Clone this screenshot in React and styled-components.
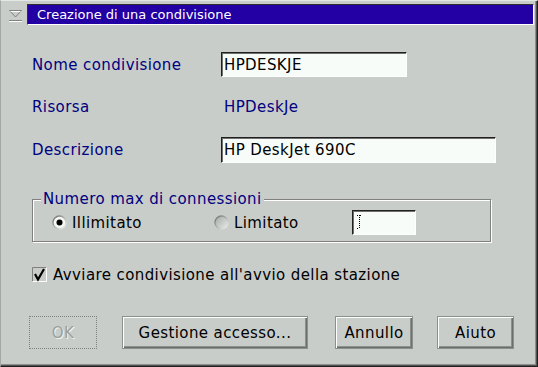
import React from "react";
import styled, { createGlobalStyle } from "styled-components";

const Global = createGlobalStyle`
  html, body { margin: 0; padding: 0; background: #c9cdc9; }
  * { box-sizing: border-box; }
`;

const Window = styled.div`
  width: 538px;
  height: 367px;
  background: #c9cdc9;
  border: 1px solid;
  border-color: #e4e8e4 #202020 #202020 #a4a8a4;
  box-shadow: inset -1px -1px 0 #505050, inset -2px -2px 0 #8c908c;
  padding-top: 3px;
  display: flex;
  flex-direction: column;
  font-family: "DejaVu Sans", "Liberation Sans", sans-serif;
  font-size: 15px;
  letter-spacing: 0.4px;
  overflow: hidden;
`;

const TitleRow = styled.div`
  display: flex;
  align-items: stretch;
  height: 21px;
  margin-right: 3px;
`;

const SysMenu = styled.div`
  width: 26px;
  flex: none;
  display: flex;
`;

const TitleBar = styled.div`
  flex: 1;
  background: #2200a4;
  border: 1px solid;
  border-color: #303030 #ffffff #ffffff #303030;
  color: #ffffff;
  font-size: 13px;
  letter-spacing: 0;
  padding-left: 9px;
  display: flex;
  align-items: center;
`;

const FormGrid = styled.div`
  margin-top: 27px;
  padding-left: 31px;
  display: grid;
  grid-template-columns: 189px 1fr;
  grid-template-rows: 25px 26px 26px;
  row-gap: 17px;
  align-items: center;
`;

const Label = styled.div`
  color: #000080;
`;

const Value = styled.div`
  color: #000080;
  padding-left: 3px;
`;

const TextInput = styled.input`
  width: ${(p) => p.$w}px;
  height: 100%;
  margin: 0;
  background: #f8fcf8;
  border: 1px solid;
  border-color: #202020 #ffffff #ffffff #202020;
  box-shadow: inset 1px 1px 0 #707070;
  padding: 0 0 0 2px;
  font-family: "DejaVu Sans", "Liberation Sans", sans-serif;
  font-size: 15px;
  letter-spacing: 0.4px;
  color: #000;
  outline: none;
`;

const Group = styled.fieldset`
  margin: 28px 0 0 31px;
  width: 459px;
  height: 51px;
  border: 1px solid #808080;
  box-shadow: inset 1px 1px 0 #ffffff, 1px 1px 0 #ffffff;
  padding: 3px 0 0 0;
  min-width: 0;
`;

const Legend = styled.legend`
  margin-left: 8px;
  padding: 0 2px;
  color: #000080;
  line-height: 16px;
  background: #c9cdc9;
`;

const GroupRow = styled.div`
  display: flex;
  align-items: center;
  height: 25px;
  padding-left: 19px;
`;

const Option = styled.label`
  width: ${(p) => p.$w}px;
  display: flex;
  align-items: center;
  gap: 5px;
  color: #000;
`;

const SmallInput = styled.div`
  width: 64px;
  height: 25px;
  background: #f8fcf8;
  border: 1px solid;
  border-color: #202020 #ffffff #ffffff #202020;
  box-shadow: inset 1px 1px 0 #707070;
  padding: 3px 0 0 3px;
  display: flex;
`;

const CheckRow = styled.label`
  margin: 25px 0 0 31px;
  height: 15px;
  display: flex;
  align-items: center;
  gap: 6px;
  color: #000;
`;

const ButtonRow = styled.div`
  margin-top: 34px;
  display: flex;
  align-items: stretch;
  height: 33px;
`;

const Button = styled.button`
  width: ${(p) => p.$w}px;
  margin-left: ${(p) => p.$ml}px;
  height: 100%;
  padding: 0;
  background: #c9cdc9;
  font-family: "DejaVu Sans", "Liberation Sans", sans-serif;
  font-size: 15px;
  letter-spacing: 0.4px;
  color: #000;
  border: 1px solid #8c908c;
  box-shadow: inset 1px 1px 0 #ffffff, inset -1px -1px 0 #6c706c,
    inset -2px -2px 0 #8c908c;
  &:disabled {
    border: 1px dotted #808080;
    box-shadow: none;
    color: #9ca09c;
    text-shadow: 1px 1px 0 #f0f4f0;
  }
`;

const Radio = ({ checked }) => (
  <svg width="15" height="15" viewBox="0 0 15 15" style={{ flex: "none" }}>
    <defs>
      <linearGradient id="rg" x1="0" y1="0" x2="1" y2="1">
        <stop offset="0" stopColor="#606460" />
        <stop offset="1" stopColor="#ffffff" />
      </linearGradient>
      <linearGradient id="ri" x1="0" y1="0" x2="1" y2="1">
        <stop offset="0" stopColor="#a8aca8" />
        <stop offset="1" stopColor="#e4e8e4" />
      </linearGradient>
    </defs>
    <circle cx="7.5" cy="7.5" r="7.2" fill="url(#rg)" />
    <circle cx="7.5" cy="7.5" r="5.8" fill={checked ? "#f4f8f4" : "url(#ri)"} />
    {checked && <circle cx="7.5" cy="7.5" r="3" fill="#000" />}
  </svg>
);

const CheckBox = () => (
  <svg width="15" height="15" viewBox="0 0 15 15" style={{ flex: "none" }}>
    <path d="M0.5 14.5 V0.5 H14.5" fill="none" stroke="#808080" />
    <path d="M0.5 14.5 H14.5 V0.5" fill="none" stroke="#ffffff" />
    <path d="M3 7 L6 12.5 L12 2" fill="none" stroke="#000" strokeWidth="2.2" />
  </svg>
);

const SysIcon = () => (
  <svg width="26" height="21" viewBox="0 0 26 21">
    <path d="M8.5 6.5 H20.5 L14.5 13 Z" fill="none" stroke="#808080" />
    <path d="M9.5 7.5 H19.5" stroke="#ffffff" />
    <path d="M8 16.5 H21" stroke="#808080" />
    <path d="M8 17.5 H21" stroke="#ffffff" />
  </svg>
);

const Cursor = () => (
  <svg width="6" height="16" viewBox="0 0 6 16">
    <path d="M3.5 1 V15" stroke="#000" strokeDasharray="1 1" />
    <path d="M1 1.5 H3 M1 14.5 H3 M4 1.5 H6" stroke="#000" strokeDasharray="1 1" />
  </svg>
);

export default function App() {
  return (
    <>
      <Global />
      <Window>
        <TitleRow>
          <SysMenu>
            <SysIcon />
          </SysMenu>
          <TitleBar>Creazione di una condivisione</TitleBar>
        </TitleRow>
        <FormGrid>
          <Label>Nome condivisione</Label>
          <TextInput $w={186} value="HPDESKJE" readOnly />
          <Label>Risorsa</Label>
          <Value>HPDeskJe</Value>
          <Label>Descrizione</Label>
          <TextInput $w={275} value="HP DeskJet 690C" readOnly />
        </FormGrid>
        <Group>
          <Legend>Numero max di connessioni</Legend>
          <GroupRow>
            <Option $w={162}>
              <Radio checked />
              Illimitato
            </Option>
            <Option $w={138}>
              <Radio />
              Limitato
            </Option>
            <SmallInput>
              <Cursor />
            </SmallInput>
          </GroupRow>
        </Group>
        <CheckRow>
          <CheckBox />
          Avviare condivisione all'avvio della stazione
        </CheckRow>
        <ButtonRow>
          <Button $w={68} $ml={28} disabled>
            OK
          </Button>
          <Button $w={186} $ml={25}>
            Gestione accesso...
          </Button>
          <Button $w={78} $ml={27}>
            Annullo
          </Button>
          <Button $w={77} $ml={24}>
            Aiuto
          </Button>
        </ButtonRow>
      </Window>
    </>
  );
}
